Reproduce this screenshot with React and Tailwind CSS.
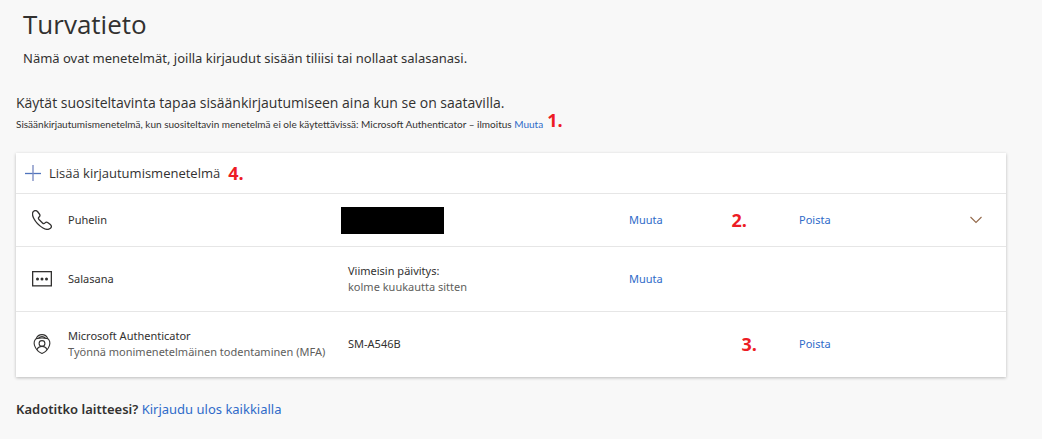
const linkClass = "text-[#2f6bc9] hover:underline cursor-pointer";

function Marker({ children, className = "" }) {
  return (
    <span className={`font-['Open_Sans','Noto_Sans',sans-serif] text-lg font-bold text-[#ed1c24] ${className}`}>
      {children}
    </span>
  );
}

function PlusIcon() {
  return (
    <svg width="16" height="16" viewBox="0 0 16 16" fill="none" aria-hidden="true">
      <path d="M0 8.5H16" stroke="#4f74bd" strokeWidth="1.3" />
      <path d="M8 0V16" stroke="#7f8fc4" strokeWidth="1.4" />
    </svg>
  );
}

function PhoneIcon() {
  return (
    <svg width="20" height="20" viewBox="0 0 20 20" fill="none" stroke="#323130" strokeWidth="1.3" strokeLinejoin="round" aria-hidden="true">
      <path d="M1.2 1.6C2.6.2 4.3.2 5.5 1.5L7.4 4C8.3 5.200 8 6.200 7.100 7C6.100 7.900 6.200 8.600 7 9.500L10.500 13C11.400 13.900 12.100 13.900 13 12.900C13.900 12 14.900 11.900 16 12.700L18.300 14.500C19.800 15.700 19.700 17.100 18.400 18.300C16.400 20 13.800 19.600 11 18C6.700 15.500 3.600 12.100 1.700 8.300C.4 5.700.1 3.200 1.200 1.600Z" />
    </svg>
  );
}

function PasswordIcon() {
  return (
    <svg width="20" height="16" viewBox="0 0 20 16" aria-hidden="true">
      <rect x="0.650" y="0.650" width="18.700" height="14.200" fill="none" stroke="#323130" strokeWidth="1.300" />
      <circle cx="5.500" cy="8" r="1.500" fill="#323130" />
      <circle cx="10" cy="8" r="1.500" fill="#323130" />
      <circle cx="14.500" cy="8" r="1.500" fill="#323130" />
    </svg>
  );
}

function AuthenticatorIcon() {
  return (
    <svg width="20" height="20" viewBox="0 0 20 20" fill="none" stroke="#323130" strokeWidth="1.1" aria-hidden="true">
      <path d="M4.200 4.600C5.200 2 7.300.6 10 .6S14.800 2 15.800 4.600" />
      <path d="M6.400 4.400C7.300 3.200 8.500 2.600 10 2.600S12.700 3.200 13.600 4.400" />
      <path d="M4.200 4.600C8 3.900 12 3.900 15.800 4.600C17.900 6.500 18.300 8.700 17.500 11.300C16.300 15 13.800 17.800 10 19.400C6.200 17.800 3.700 15 2.500 11.300C1.700 8.700 2.100 6.500 4.200 4.600Z" />
      <circle cx="10" cy="9.500" r="2.900" />
      <path d="M4.900 15.800C5.800 13.600 7.600 12.400 10 12.400S14.200 13.600 15.100 15.800" />
    </svg>
  );
}

function ChevronIcon() {
  return (
    <svg width="12" height="8" viewBox="0 0 12 8" fill="none" aria-hidden="true">
      <path d="M0.500 1L6 6.500L11.500 1" stroke="#94694a" strokeWidth="1.100" />
    </svg>
  );
}

function MethodRow({ icon, name, detail, value, change, remove, expand, height }) {
  return (
    <tr className={`border-t border-[#e6e6e6] ${height}`}>
      <td className="pl-4">{icon}</td>
      <th scope="row" className="text-left font-normal whitespace-nowrap">
        {name}
        {detail && <span className="block text-[#605e5c]">{detail}</span>}
      </th>
      <td>{value}</td>
      <td>{change}</td>
      <td>{remove}</td>
      <td className="pr-6 text-right">{expand}</td>
    </tr>
  );
}

export default function App() {
  return (
    <main className="min-h-screen bg-[#f8f8f8] pl-4 pr-9 pt-2 font-['Noto_Sans','Open_Sans',sans-serif] text-[#323130]">
      <header className="pl-[7px]">
        <h1 className="font-['Open_Sans','Noto_Sans',sans-serif] text-[26px] leading-8">Turvatieto</h1>
        <p className="mt-2 text-[13px] leading-5">
          Nämä ovat menetelmät, joilla kirjaudut sisään tiliisi tai nollaat salasanasi.
        </p>
      </header>

      <section className="mt-6">
        <h2 className="font-['Open_Sans','Noto_Sans',sans-serif] text-sm leading-[22px]">
          Käytät suositeltavinta tapaa sisäänkirjautumiseen aina kun se on saatavilla.
        </h2>
        <p className="flex items-start font-['Lato','Noto_Sans',sans-serif] text-[10px] leading-5">
          <span>
            Sisäänkirjautumismenetelmä, kun suositeltavin menetelmä ei ole käytettävissä: Microsoft Authenticator – ilmoitus{" "}
            <button type="button" className={linkClass}>Muuta</button>
          </span>
          <Marker className="ml-1 leading-3">1.</Marker>
        </p>
      </section>

      <section className="mt-[19px] bg-white shadow-[0_1px_3px_rgba(0,0,0,0.25)]">
        <div className="flex h-10 items-center pl-[9px]">
          <button
            type="button"
            className="flex cursor-pointer items-center gap-2 font-['Open_Sans','Noto_Sans',sans-serif] text-[13px] leading-5"
          >
            <PlusIcon />
            Lisää kirjautumismenetelmä
          </button>
          <Marker className="ml-2 leading-5">4.</Marker>
        </div>
        <table className="w-full table-fixed border-collapse text-[11px] leading-4">
          <colgroup>
            <col className="w-[52px]" />
            <col className="w-[273px]" />
            <col className="w-[288px]" />
            <col className="w-[170px]" />
            <col className="w-[100px]" />
            <col />
          </colgroup>
          <tbody>
            <MethodRow
              height="h-[53px]"
              icon={<PhoneIcon />}
              name="Puhelin"
              value={<div className="h-[27px] w-[103px] bg-black" />}
              change={
                <div className="flex items-center justify-between pr-[52px]">
                  <button type="button" className={linkClass}>Muuta</button>
                  <Marker className="leading-5">2.</Marker>
                </div>
              }
              remove={<button type="button" className={linkClass}>Poista</button>}
              expand={
                <button type="button" aria-label="Laajenna" className="cursor-pointer">
                  <ChevronIcon />
                </button>
              }
            />
            <MethodRow
              height="h-[65px]"
              icon={<PasswordIcon />}
              name="Salasana"
              value={
                <div className="pl-[7px]">
                  Viimeisin päivitys:
                  <span className="block text-[#605e5c]">kolme kuukautta sitten</span>
                </div>
              }
              change={<button type="button" className={linkClass}>Muuta</button>}
            />
            <MethodRow
              height="h-[65px]"
              icon={<AuthenticatorIcon />}
              name="Microsoft Authenticator"
              detail="Työnnä monimenetelmäinen todentaminen (MFA)"
              value={<div className="pl-[7px]">SM-A546B</div>}
              change={
                <div className="flex justify-end pr-[42px]">
                  <Marker className="leading-5">3.</Marker>
                </div>
              }
              remove={<button type="button" className={linkClass}>Poista</button>}
            />
          </tbody>
        </table>
      </section>

      <p className="mt-[22px] text-[13px] leading-5">
        <span className="font-semibold">Kadotitko laitteesi?</span>{" "}
        <a href="#logout" className={linkClass}>Kirjaudu ulos kaikkialla</a>
      </p>
    </main>
  );
}
